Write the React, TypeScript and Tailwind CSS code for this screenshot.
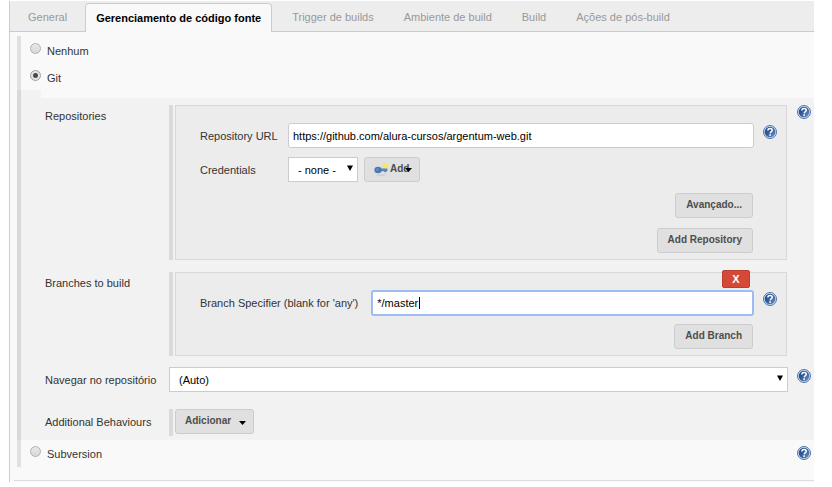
import type { ReactNode } from "react";

const tabs = [
  "General",
  "Gerenciamento de código fonte",
  "Trigger de builds",
  "Ambiente de build",
  "Build",
  "Ações de pós-build",
];

function Help({ topic }: { topic: string }) {
  return (
    <button type="button" aria-label={`Help: ${topic}`} className="block size-3.5 shrink-0">
      <svg viewBox="0 0 14 14" className="size-3.5" aria-hidden="true">
        <defs>
          <linearGradient id="helpFill" x1="0" y1="0" x2="1" y2="1">
            <stop offset="0" stopColor="#204a87" />
            <stop offset="0.45" stopColor="#305a98" />
            <stop offset="1" stopColor="#7196c9" />
          </linearGradient>
        </defs>
        <circle cx="7" cy="7" r="6.5" fill="#d3dfee" stroke="#5076ac" strokeWidth="1" />
        <circle cx="7" cy="7" r="5.3" fill="url(#helpFill)" />
        <path
          d="M4.9 5.5C4.9 4.2 5.8 3.5 7.1 3.5S9.3 4.2 9.3 5.3C9.3 6.6 7.5 6.7 7.2 8.3"
          fill="none"
          stroke="#fff"
          strokeWidth="1.5"
        />
        <rect x="6.3" y="9.3" width="1.6" height="1.6" fill="#fff" />
      </svg>
    </button>
  );
}

function Radio({ id, label, checked }: { id: string; label: string; checked?: boolean }) {
  return (
    <div className="flex items-start">
      <input
        type="radio"
        name="scm"
        id={id}
        defaultChecked={checked}
        className="size-[11px] shrink-0 appearance-none rounded-full border border-[#b0b0b0] bg-linear-to-b from-[#e9e9e9] to-[#d8d8d8] checked:border-[#a0a0a0] checked:bg-[radial-gradient(circle,#4a4a4a_0_2px,#e4e4e4_3px)]"
      />
      <label htmlFor={id} className="ml-1.5 pt-px leading-[14px]">
        {label}
      </label>
    </div>
  );
}

function Button({ children, menu }: { children: ReactNode; menu?: boolean }) {
  return (
    <button
      type="button"
      className={`flex h-[25px] items-center rounded-[3px] border border-[#cccccc] bg-[#e0e0e0] pb-px text-[10px] font-bold text-[#4d4d4d] ${menu ? "pr-[7px] pl-[9px]" : "px-2.5"}`}
    >
      {children}
    </button>
  );
}

function Triangle() {
  return (
    <svg
      viewBox="0 0 6 6"
      className="pointer-events-none absolute top-2 right-[5px] size-1.5"
      aria-hidden="true"
    >
      <path d="M0 0.5H6L3 6Z" fill="#000" />
    </svg>
  );
}

function Caret() {
  return (
    <svg viewBox="0 0 7 4" className="h-1 w-[7px]" aria-hidden="true">
      <path d="M0 0H7L3.5 4Z" fill="#000" />
    </svg>
  );
}

function Box({ children }: { children: ReactNode }) {
  return (
    <div className="flex min-w-0 flex-1 border-l-4 border-[#dadada] pl-0.5">
      <div className="min-w-0 flex-1 border border-[#d8d8d8] bg-[#ececec] pl-6">{children}</div>
    </div>
  );
}

function Key() {
  return (
    <svg viewBox="0 0 14 14" className="size-3.5" aria-hidden="true">
      <ellipse cx="7" cy="13" rx="5" ry="0.7" fill="#cccccc" />
      <circle cx="11" cy="4.2" r="2.6" fill="#f4e94e" opacity="0.85" />
      <rect x="5" y="6.6" width="8.5" height="2.6" rx="0.8" fill="#5b84b8" />
      <rect x="10.2" y="8.4" width="2.2" height="1.8" fill="#5b84b8" />
      <ellipse cx="4" cy="8" rx="3.6" ry="3.3" fill="#4a78b5" />
      <circle cx="3.4" cy="7.4" r="1.5" fill="#5d8ac6" />
    </svg>
  );
}

const field = "h-[25px] border border-[#cccccc] bg-white text-[11px] text-black outline-none";

export default function App() {
  return (
    <main className="bg-white pt-px pr-[18px] pl-[9px] font-['Liberation_Sans',Arial,sans-serif] text-[11px] leading-[14px] text-[#333333]">
      <form className="border-l border-[#cccccc] bg-[#f9f9f9]" onSubmit={(e) => e.preventDefault()}>
        <div role="tablist" className="flex h-[31px] items-end border-b border-[#cccccc] bg-[#ededed]">
          {tabs.map((tab, i) => (
            <button
              key={tab}
              type="button"
              role="tab"
              aria-selected={i === 1}
              className={
                i === 1
                  ? "-mb-px h-[29px] rounded-t-[4px] border border-b-0 border-[#cccccc] bg-[#f9f9f9] px-2.5 pb-px font-bold text-black"
                  : i === 0
                    ? "h-7 px-[18px] text-[#999999]"
                    : i === 2
                      ? "h-7 pr-[15px] pl-5 text-[#999999]"
                      : "h-7 px-[15px] text-[#999999]"
              }
            >
              {tab}
            </button>
          ))}
        </div>

        <div className="mt-1 ml-[7px]">
          <div className="flex flex-col gap-3 border-l-4 border-[#e0e0e0] pt-[7px] pb-[5px] pl-[9px]">
            <Radio id="none" label="Nenhum" />
            <Radio id="git" label="Git" checked />
          </div>

          <section aria-label="Git" className="border-l-4 border-[#d8d8d8] bg-[#f2f2f2]">
            <div className="ml-5 h-2 bg-[#f9f9f9]" />
            <div className="pt-[7px] pr-[3px] pb-1 pl-6">
              <div className="flex items-start">
                <h2 className="w-[124px] shrink-0 pt-1">Repositories</h2>
                <Box>
                  <div className="flex items-start pt-[17px] pr-[9px]">
                    <label htmlFor="url" className="w-[88px] shrink-0 pt-1.5">
                      Repository URL
                    </label>
                    <input
                      id="url"
                      defaultValue="https://github.com/alura-cursos/argentum-web.git"
                      className={`${field} min-w-0 flex-1 rounded-[3px] px-1`}
                    />
                    <div className="ml-[9px] pt-0.5">
                      <Help topic="Repository URL" />
                    </div>
                  </div>
                  <div className="flex items-start pt-[9px]">
                    <label htmlFor="credentials" className="w-[88px] shrink-0 pt-1.5">
                      Credentials
                    </label>
                    <div className="relative">
                      <select
                        id="credentials"
                        className={`${field} block w-[70px] appearance-none pl-[9px]`}
                      >
                        <option>- none -</option>
                      </select>
                      <Triangle />
                    </div>
                    <div className="relative ml-1.5">
                      <button
                        type="button"
                        className="flex h-[25px] w-14 items-center gap-0.5 rounded-[3px] border border-[#cccccc] bg-[#e0e0e0] pb-px pl-[9px] text-[10px] font-bold text-[#4d4d4d]"
                      >
                        <Key />
                        Add
                      </button>
                      <span className="pointer-events-none absolute top-[11px] right-2">
                        <Caret />
                      </span>
                    </div>
                  </div>
                  <div className="flex flex-col items-end gap-2.5 pt-[11px] pr-[33px] pb-1.5">
                    <Button>Avançado...</Button>
                    <Button>Add Repository</Button>
                  </div>
                </Box>
                <div className="ml-2.5">
                  <Help topic="Repositories" />
                </div>
              </div>

              <div className="mt-3 flex items-start pr-6">
                <h2 className="w-[124px] shrink-0 pt-1">Branches to build</h2>
                <Box>
                  <div className="relative pt-[17px]">
                    <button
                      type="button"
                      aria-label="Delete branch"
                      className="absolute -top-[3px] right-9 h-[18px] w-7 rounded-[2px] border border-[#b84032] bg-[#d64937] text-[11px] leading-4 font-bold text-white"
                    >
                      X
                    </button>
                    <div className="flex items-start pr-[9px]">
                      <label htmlFor="branch" className="shrink-0 pt-1.5 pr-[13px]">
                        Branch Specifier (blank for 'any')
                      </label>
                      <div className="relative min-w-0 flex-1">
                        <input
                          id="branch"
                          defaultValue="*/master"
                          className="block h-[26px] w-full rounded-[3px] border-2 border-[#9dbdf2] bg-white px-1 text-[11px] text-black outline-none"
                        />
                        <span className="pointer-events-none absolute top-[7px] left-12 h-3 w-px bg-black" />
                      </div>
                      <div className="ml-[9px] pt-0.5">
                        <Help topic="Branch Specifier" />
                      </div>
                    </div>
                  </div>
                  <div className="flex justify-end pt-2 pr-[33px] pb-1.5">
                    <Button>Add Branch</Button>
                  </div>
                </Box>
              </div>

              <div className="mt-[11px] flex items-start">
                <label htmlFor="browser" className="w-[124px] shrink-0 pt-1.5">
                  Navegar no repositório
                </label>
                <div className="relative min-w-0 flex-1">
                  <select id="browser" className={`${field} block w-full appearance-none pl-[9px]`}>
                    <option>(Auto)</option>
                  </select>
                  <Triangle />
                </div>
                <div className="ml-[9px] pt-0.5">
                  <Help topic="Navegar no repositório" />
                </div>
              </div>

              <div className="mt-[17px] flex items-start">
                <h2 className="w-[124px] shrink-0 pt-1.5">Additional Behaviours</h2>
                <div className="border-l-4 border-[#dadada] pb-0.5 pl-0.5">
                  <Button menu>
                    Adicionar
                    <span className="ml-2 pt-1">
                      <Caret />
                    </span>
                  </Button>
                </div>
              </div>
            </div>
          </section>

          <div className="flex items-start justify-between border-l-4 border-[#e0e0e0] pt-1.5 pr-[3px] pb-1.5 pl-[9px]">
            <Radio id="svn" label="Subversion" />
            <Help topic="Subversion" />
          </div>
        </div>
        <hr className="mt-[13px] ml-1 border-[#dddddd] pb-px" />
      </form>
    </main>
  );
}
